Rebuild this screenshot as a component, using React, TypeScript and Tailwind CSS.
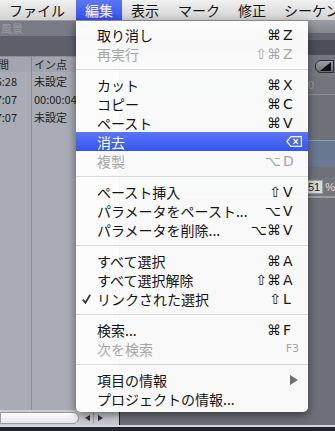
import React from "react";

type Item =
  | "sep"
  | {
      label: string;
      mods?: string;
      key?: string;
      disabled?: boolean;
      active?: boolean;
      checked?: boolean;
      del?: boolean;
      submenu?: boolean;
      small?: boolean;
    };

const ITEMS: Item[] = [
  { label: "取り消し", mods: "⌘", key: "Z" },
  { label: "再実行", mods: "⇧⌘", key: "Z", disabled: true },
  "sep",
  { label: "カット", mods: "⌘", key: "X" },
  { label: "コピー", mods: "⌘", key: "C" },
  { label: "ペースト", mods: "⌘", key: "V" },
  { label: "消去", del: true, active: true },
  { label: "複製", mods: "⌥", key: "D", disabled: true },
  "sep",
  { label: "ペースト挿入", mods: "⇧", key: "V" },
  { label: "パラメータをペースト...", mods: "⌥", key: "V" },
  { label: "パラメータを削除...", mods: "⌥⌘", key: "V" },
  "sep",
  { label: "すべて選択", mods: "⌘", key: "A" },
  { label: "すべて選択解除", mods: "⇧⌘", key: "A" },
  { label: "リンクされた選択", mods: "⇧", key: "L", checked: true },
  "sep",
  { label: "検索...", mods: "⌘", key: "F" },
  { label: "次を検索", key: "F3", disabled: true, small: true },
  "sep",
  { label: "項目の情報", submenu: true },
  { label: "プロジェクトの情報..." },
];

const JP = "font-['Noto_Sans_CJK_JP',sans-serif]";
const KEYS = "font-['DejaVu_Sans','Noto_Sans_CJK_JP',sans-serif]";

function DeleteKey() {
  return (
    <svg width="16" height="11" viewBox="0 0 16 11" fill="none" stroke="white" strokeWidth="1.2">
      <path d="M5 0.6 H15.4 V10.4 H5 L0.8 5.5 Z" />
      <path d="M7.5 3 L12 8 M12 3 L7.5 8" />
    </svg>
  );
}

function Row({ item }: { item: Exclude<Item, "sep"> }) {
  const text = item.active ? "text-white" : item.disabled ? "text-[#a6a6a6]" : "text-[#141414]";
  return (
    <div
      className={`flex h-[19px] items-center pr-[13px] ${text} ${
        item.active ? "bg-gradient-to-b from-[#5b77f6] to-[#3653ee]" : ""
      }`}
    >
      <span className="flex w-[21px] shrink-0 pl-[6px]">
        {item.checked && (
          <svg width="9" height="10" viewBox="0 0 9 10">
            <path d="M0.8 5.6 L3.4 8.8 L8.2 0.8" fill="none" stroke="#3a3a3a" strokeWidth="1.8" />
          </svg>
        )}
      </span>
      <span className={`flex-1 whitespace-nowrap text-[14px] leading-none ${JP}`}>{item.label}</span>
      {item.del && (
        <span className="mr-[-7px]">
          <DeleteKey />
        </span>
      )}
      {item.submenu && (
        <svg width="8" height="10" viewBox="0 0 8 10" className="mr-[-3px]">
          <path d="M0 0 L8 5 L0 10 Z" fill="#6f6f6f" />
        </svg>
      )}
      {item.small && <span className={`mr-[-4px] text-[11px] leading-none ${KEYS}`}>{item.key}</span>}
      {item.mods !== undefined && (
        <span className={`flex items-center text-[14px] leading-none ${KEYS}`}>
          <span>{item.mods}</span>
          <span className="ml-[2px] w-[12px]">{item.key}</span>
        </span>
      )}
    </div>
  );
}

export default function App() {
  const menus = ["ファイル", "編集", "表示", "マーク", "修正", "シーケン"];
  return (
    <div className="relative h-[431px] w-[335px] overflow-hidden bg-[#6d7078]">
      {/* menu bar */}
      <div className="flex h-[21px] items-stretch border-b border-[#9a9a9a] bg-gradient-to-b from-[#f1f1f1] to-[#d2d2d2]">
        {menus.map((m, i) => (
          <div
            key={m}
            className={`flex items-center whitespace-nowrap px-[9px] text-[14px] leading-none ${JP} ${
              i === 1 ? "ml-[2px] bg-gradient-to-b from-[#5b77f6] to-[#3251ee] text-white" : "text-[#141414]"
            } ${i === 3 ? "ml-[1px]" : ""}`}
          >
            {m}
          </div>
        ))}
      </div>

      {/* app behind */}
      <div className="flex h-[406px] flex-col">
        <div className="flex flex-1">
          {/* browser */}
          <div className="flex w-[124px] flex-col bg-[#a9acb4]">
            <div className={`h-[15px] bg-[#787b84] pl-[1px] text-[11px] leading-[15px] text-[#9a9ca4] ${JP}`}>風景</div>
            <div className="h-[21px] border-b border-[#8d9098] bg-[#5e6169]" />
            <div className={`flex h-[15px] bg-[#a2a5ad] text-[11px] leading-[15px] text-[#1e1e1e] ${JP}`}>
              <div className="w-[32px] border-r border-[#83868e]">
                <span className="ml-[-2px]">間</span>
              </div>
              <div className="pl-[2px]">イン点</div>
            </div>
            {[
              ["00:00:05:28", "未設定"],
              ["00:00:07:07", "00:00:04;"],
              ["00:00:07:07", "未設定"],
            ].map(([a, b], i) => (
              <div key={i} className={`flex h-[18px] items-center text-[11px] text-[#1e1e1e] ${JP}`}>
                <div className="flex h-full w-[32px] items-center border-r border-[#8d9098]">
                  <div className="flex w-[17px] justify-end overflow-hidden whitespace-nowrap">{a}</div>
                </div>
                <div className="whitespace-nowrap pl-[2px]">{b}</div>
              </div>
            ))}
            <div className="flex flex-1">
              <div className="w-[32px] border-r border-[#8d9098]" />
            </div>
            {/* scrollbar */}
            <div className="flex h-[15px] items-center bg-[#c9cbd0]">
              <div className="h-[12px] w-[79px] rounded-r-full border border-[#9a9ca2] bg-gradient-to-b from-white to-[#e4e5e8]" />
              <div className="ml-[3px] flex h-full items-center">
                <span className="flex h-[11px] w-[12px] items-center justify-center border-r border-[#a0a3a8]">
                  <svg width="5" height="6" viewBox="0 0 5 6">
                    <path d="M5 0 L0 3 L5 6 Z" fill="#333" />
                  </svg>
                </span>
                <span className="flex h-[11px] w-[12px] items-center justify-center">
                  <svg width="5" height="6" viewBox="0 0 5 6">
                    <path d="M0 0 L5 3 L0 6 Z" fill="#333" />
                  </svg>
                </span>
              </div>
            </div>
          </div>
          <div className="w-[1px] bg-[#1b1e25]" />
          {/* viewer */}
          <div className="flex flex-1 flex-col">
            <div className="h-[12px] bg-gradient-to-b from-[#9a9da4] to-[#83868d]" />
            <div className="h-[7px] bg-[#63666d]" />
            <div className="h-[15px] bg-[#4c4f57]" />
            <div className="flex h-[22px] items-center justify-end bg-[#75787f] pr-[1px]">
              <div className="flex h-[13px] w-[19px] items-center rounded-l-[6px] border border-[#2a2c30] bg-gradient-to-b from-[#9ea1a7] to-[#6b6e74] pl-[4px]">
                <svg width="11" height="9" viewBox="0 0 11 9">
                  <path d="M0 9 L11 9 L11 0 Z" fill="#111" />
                </svg>
              </div>
            </div>
            <div className="flex h-[18px] items-center border-b border-[#8b8e95] bg-[#72757c] pl-[182px] text-[11px] text-[#9ea1a7]">
              <span className="font-['Liberation_Sans',sans-serif]">00</span>
            </div>
            <div className="h-[45px] bg-[#6e7178]" />
            <div className="h-[27px] border-t border-[#8f99ae] bg-[#6b7892]" />
            <div className="h-[11px] bg-[#6e7178]" />
            <div className="flex h-[18px] items-center bg-[#73767d] pl-[185px]">
              <span className="h-[14px] border border-[#9c9fa5] bg-[#d9dadd] px-[2px] text-[11px] leading-[12px] text-[#222] font-['Liberation_Sans',sans-serif]">
                51
              </span>
              <span className="ml-[2px] text-[11px] text-[#ddd] font-['Liberation_Sans',sans-serif]">%</span>
            </div>
            <div className="h-[2px] bg-[#9a9da4]" />
            <div className="flex-1 bg-[#6d7078]" />
          </div>
        </div>
        <div className="h-[2px] bg-[#d6d7da]" />
      </div>
      <div className="h-[4px] bg-[#20242c]" />

      {/* Edit menu */}
      <div className="absolute left-[76px] top-[21px] w-[232px] rounded-b-[5px] bg-white/[0.96] py-[4px] shadow-[0_3px_10px_rgba(0,0,0,0.5)]">
        {ITEMS.map((item, i) =>
          item === "sep" ? (
            <div key={i} className="flex h-[12px] items-center">
              <div className="h-px w-full bg-[#dadada]" />
            </div>
          ) : (
            <Row key={i} item={item} />
          )
        )}
      </div>
    </div>
  );
}
